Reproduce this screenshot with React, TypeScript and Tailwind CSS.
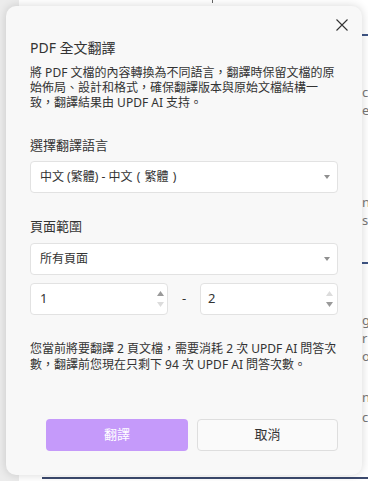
import React from "react";

const FONT = '"Noto Sans", "Noto Sans CJK TC", sans-serif';

function Caret() {
  return (
    <svg width="6" height="4" viewBox="0 0 6 4" className="block">
      <polygon points="0,0 6,0 3,4" fill="#8f8f8f" />
    </svg>
  );
}

function Spinner({ upDark }: { upDark: boolean }) {
  return (
    <div className="flex flex-col gap-[6px] items-center">
      <svg width="7" height="5" viewBox="0 0 7 5" className="block">
        <polygon points="0,5 7,5 3.5,0" fill={upDark ? "#9a9a9a" : "#dcdcdc"} />
      </svg>
      <svg width="7" height="5" viewBox="0 0 7 5" className="block">
        <polygon points="0,0 7,0 3.5,5" fill={upDark ? "#dcdcdc" : "#9a9a9a"} />
      </svg>
    </div>
  );
}

export default function App() {
  return (
    <div
      className="relative w-[368px] h-[481px] overflow-hidden bg-[#ececec]"
      style={{ fontFamily: FONT }}
    >
      {/* background document page */}
      <div className="ml-[19px] h-full bg-white flex flex-col">
        <div className="ml-[193px] h-[3px] w-px bg-[#666]" />
        <div className="flex-1 ml-[343px] flex flex-col text-[13px] leading-[18px] text-[#777] whitespace-nowrap">
          <div className="mt-[31px] h-[2px] bg-[#3f5585]" />
          <div className="mt-[47px]">cl</div>
          <div>ec</div>
          <div className="mt-[74px]">ns</div>
          <div>s</div>
          <div className="mt-[33px] h-[2px] bg-[#3f5585]" />
          <div className="mt-[47px]">g</div>
          <div>r</div>
          <div>o</div>
          <div className="mt-[23px]">ne</div>
          <div className="mt-[2px]">c</div>
        </div>
        <div className="ml-[23px] h-[2px] mb-[2px] bg-[#3c4a6e]" />
      </div>

      {/* dialog */}
      <div className="absolute left-[6px] top-[6px] w-[356px] rounded-[10px] bg-[#f8f8f8] shadow-[0_0_10px_rgba(0,0,0,0.16)] px-[24px] pt-[32px] pb-[24px] flex flex-col text-[#333]">
        <button className="absolute right-[14px] top-[13px] w-[12px] h-[12px]">
          <svg width="12" height="12" viewBox="0 0 12 12" className="block">
            <path d="M0.5 0.5 L11.5 11.5 M11.5 0.5 L0.5 11.5" stroke="#333" strokeWidth="1.1" fill="none" />
          </svg>
        </button>

        <div className="text-[14px] leading-[20px] text-[#333]">PDF 全文翻譯</div>

        <div className="mt-[7px] text-[12px] leading-[15px] text-[#333]">
          將 PDF 文檔的內容轉換為不同語言，翻譯時保留文檔的原
          <br />
          始佈局、設計和格式，確保翻譯版本與原始文檔結構一
          <br />
          致，翻譯結果由 UPDF AI 支持。
        </div>

        <div className="mt-[26px] text-[13px] leading-[18px] text-[#333]">選擇翻譯語言</div>
        <div className="mt-[7px] h-[32px] rounded-[4px] border border-[#e2e2e2] bg-white flex items-center justify-between pl-[9px] pr-[7px] text-[12px] text-[#333]">
          <span>
            中文 (繁體) - 中文
            <span className="inline-block w-[12px] text-center">(</span>
            繁體
            <span className="inline-block w-[12px] text-center">)</span>
          </span>
          <Caret />
        </div>

        <div className="mt-[24px] text-[13px] leading-[18px] text-[#333]">頁面範圍</div>
        <div className="mt-[8px] h-[32px] rounded-[4px] border border-[#e2e2e2] bg-white flex items-center justify-between pl-[9px] pr-[7px] text-[12px] text-[#333]">
          <span>所有頁面</span>
          <Caret />
        </div>

        <div className="mt-[8px] flex items-center">
          <div className="w-[138px] h-[32px] rounded-[4px] border border-[#e2e2e2] bg-white flex items-center justify-between pl-[9px] pr-[3px] text-[13px] text-[#333]">
            <span>1</span>
            <Spinner upDark={true} />
          </div>
          <div className="w-[32px] text-center text-[13px] text-[#333]">-</div>
          <div className="w-[138px] h-[32px] rounded-[4px] border border-[#e2e2e2] bg-white flex items-center justify-between pl-[7px] pr-[4px] text-[13px] text-[#333]">
            <span>2</span>
            <Spinner upDark={false} />
          </div>
        </div>

        <div className="mt-[26px] text-[12px] leading-[16px] text-[#333]">
          您當前將要翻譯 2 頁文檔，需要消耗 2 次 UPDF AI 問答次
          <br />
          數，翻譯前您現在只剩下 94 次 UPDF AI 問答次數。
        </div>

        <div className="mt-[46px] flex justify-end gap-[9px]">
          <button className="w-[142px] h-[32px] rounded-[4px] bg-[#c59afa] text-white text-[13px]">
            翻譯
          </button>
          <button className="w-[141px] h-[32px] rounded-[4px] border border-[#dedede] bg-[#fafafa] text-[#333] text-[13px]">
            取消
          </button>
        </div>
      </div>
    </div>
  );
}
